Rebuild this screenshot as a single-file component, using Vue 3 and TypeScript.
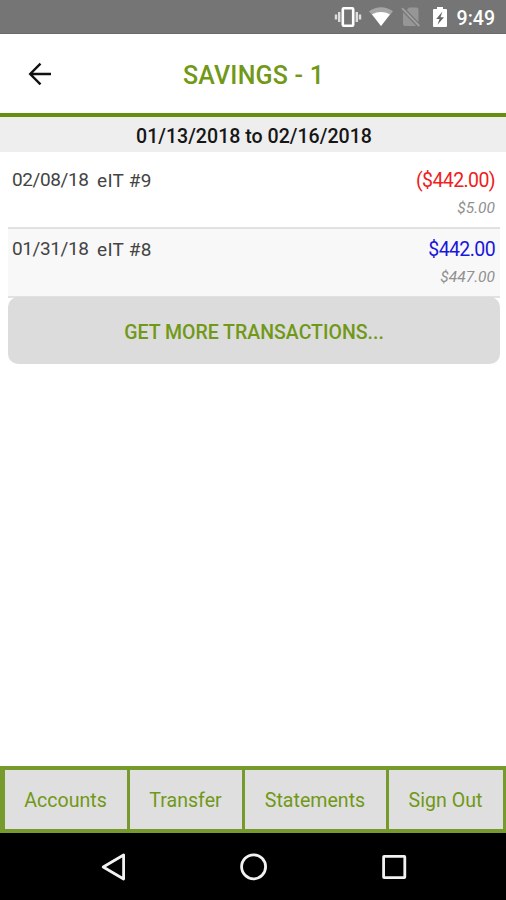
<script setup lang="ts">
interface Transaction {
  date: string
  description: string
  amount: string
  balance: string
  debit: boolean
}

const transactions: Transaction[] = [
  { date: '02/08/18', description: 'eIT #9', amount: '($442.00)', balance: '$5.00', debit: true },
  { date: '01/31/18', description: 'eIT #8', amount: '$442.00', balance: '$447.00', debit: false },
]

const tabs: string[] = ['Accounts', 'Transfer', 'Statements', 'Sign Out']
</script>

<template>
  <div class="screen">
    <div class="status-bar">
      <svg class="vibrate" width="28" height="22" viewBox="0 0 28 22">
        <path d="M2 8.5v5M5.2 6v10M22.8 6v10M26 8.5v5" stroke="#dedede" stroke-width="2.4" />
        <rect x="8.8" y="2.3" width="10.4" height="17.4" rx="1" fill="none" stroke="#fff" stroke-width="2.6" />
      </svg>
      <svg class="wifi" width="24" height="19" viewBox="0 0 24 19">
        <path d="M0 4.2Q12-3.8 24 4.2L12 19Z" fill="#a5a5a5" />
        <path d="M3 7.2Q12 3 21 7.2L12 19Z" fill="#fff" />
      </svg>
      <svg class="no-sim" width="20" height="20" viewBox="0 0 20 20">
        <path d="M5.7 2.9L8 0.5h7.5q2 0 2 2v12.7ZM2 5.2L15.3 19H4q-2 0-2-2Z" fill="#969696" />
        <path d="M1 1.2L18.3 19" stroke="#a0a0a0" stroke-width="1.8" />
      </svg>
      <svg class="battery" width="14" height="20" viewBox="0 0 14 20">
        <path d="M4 0h6v2h3q1 0 1 1v16q0 1-1 1H1q-1 0-1-1V3q0-1 1-1h3Z" fill="#fff" />
        <path d="M9.5 4.5L3.2 12h3.3L4.5 17.8 11 10.2H7.5Z" fill="#666" />
      </svg>
      <span class="clock">9:49</span>
    </div>

    <header class="header">
      <button class="back" aria-label="Back">
        <svg width="24" height="24" viewBox="0 0 24 24">
          <path d="M12.5 1.6L2.2 12l10.3 10.4M2.5 12H23" fill="none" stroke="#111" stroke-width="2.4" />
        </svg>
      </button>
      <h1>SAVINGS - 1</h1>
    </header>

    <div class="range"><span>01/13/2018 to 02/16/2018</span></div>

    <main class="content">
      <div v-for="item in transactions" :key="item.date" class="row">
        <span class="date">{{ item.date }}</span>
        <span class="description">{{ item.description }}</span>
        <div class="figures">
          <span class="amount" :class="{ debit: item.debit }">{{ item.amount }}</span>
          <span class="balance">{{ item.balance }}</span>
        </div>
      </div>
      <button class="more"><span>GET MORE TRANSACTIONS...</span></button>
    </main>

    <nav class="tabs">
      <button v-for="tab in tabs" :key="tab"><span>{{ tab }}</span></button>
    </nav>

    <div class="system-nav">
      <svg width="28" height="28" viewBox="0 0 28 28">
        <path d="M24.6 2v24L4.2 14Z" fill="none" stroke="#f2f2f2" stroke-width="2.8" stroke-linejoin="round" />
      </svg>
      <svg width="28" height="28" viewBox="0 0 28 28">
        <circle cx="13.6" cy="13.8" r="12" fill="none" stroke="#f2f2f2" stroke-width="2.8" />
      </svg>
      <svg width="28" height="28" viewBox="0 0 28 28">
        <rect x="3.6" y="3.4" width="21.2" height="21.2" rx=".5" fill="none" stroke="#f2f2f2" stroke-width="2.8" />
      </svg>
    </div>
  </div>
</template>

<style>
body {
  margin: 0;
  background: #fff;
}
</style>

<style scoped>
.screen {
  width: 506px;
  height: 900px;
  display: flex;
  flex-direction: column;
  overflow: hidden;
  background: #fff;
  font-family: Roboto, "Liberation Sans", sans-serif;
  color: #333;
}
.screen * {
  box-sizing: border-box;
}
button {
  margin: 0;
  padding: 0;
  border: 0;
  background: none;
  font-family: inherit;
  color: #719817;
}
svg {
  display: block;
  flex: none;
}
.status-bar {
  flex: none;
  height: 34px;
  padding-right: 11px;
  display: flex;
  align-items: center;
  justify-content: flex-end;
  background: #757575;
  border-bottom: 1px solid #6a6a6a;
}
.wifi {
  margin-left: 7px;
}
.no-sim {
  margin-left: 8px;
}
.battery {
  margin-left: 12px;
}
.clock {
  margin-left: 10px;
  padding-top: 3px;
  font-size: 19.5px;
  font-weight: 500;
  line-height: 33px;
  color: #fff;
}
.header {
  flex: none;
  height: 83px;
  display: grid;
  grid-template-columns: 80px 1fr 80px;
  align-items: center;
  border-bottom: 4px solid #668f10;
}
.back {
  padding-left: 28px;
}
h1 {
  margin: 0;
  padding: 4px 0 0 1px;
  text-align: center;
  font-size: 25px;
  line-height: 30px;
  font-weight: 500;
  letter-spacing: 0.2px;
  white-space: nowrap;
  color: #719817;
}
.range {
  flex: none;
  height: 35px;
  padding: 3px 0 0 2px;
  text-align: center;
  background: #eee;
  font-size: 19.6px;
  line-height: 34px;
  font-weight: 500;
  color: #161616;
}
.content {
  flex: 1;
  padding: 0 6px 0 8px;
}
.row {
  height: 69px;
  padding: 7px 5px 0 4px;
  display: flex;
  background: #f8f8f8;
  border-bottom: 2px solid #e1e1e1;
  font-size: 19px;
  line-height: 26px;
  color: #444;
}
.row:first-child {
  height: 77px;
  padding-top: 15px;
  background: #fff;
}
.date {
  width: 85px;
  letter-spacing: -0.4px;
}
.description {
  padding-top: 1px;
  letter-spacing: 0.3px;
}
.figures {
  margin-left: auto;
  padding-top: 1px;
  display: flex;
  flex-direction: column;
  align-items: flex-end;
}
.amount {
  font-size: 19.5px;
  letter-spacing: -0.6px;
  color: #1818dc;
}
.amount.debit {
  color: #ee2020;
}
.balance {
  padding-top: 2px;
  font-size: 15.5px;
  line-height: 24px;
  font-style: italic;
  color: #909090;
}
.more {
  width: 100%;
  height: 67px;
  display: block;
  margin-top: -1px;
  padding-top: 3px;
  border-radius: 10px;
  background: #dcdcdc;
  font-size: 19.5px;
  font-weight: 500;
}
.tabs {
  flex: none;
  height: 67px;
  padding: 4px 3px 4px 5px;
  display: grid;
  grid-template-columns: 122px 112px 141px 1fr;
  gap: 3px;
  background: #769b2c;
}
.tabs button {
  padding: 2px 1px 0 0;
  background: #dfdfdf;
  font-size: 19.6px;
}
.system-nav {
  flex: none;
  height: 67px;
  padding: 0 98px 0 99px;
  display: flex;
  align-items: center;
  justify-content: space-between;
  background: #000;
}
</style>
